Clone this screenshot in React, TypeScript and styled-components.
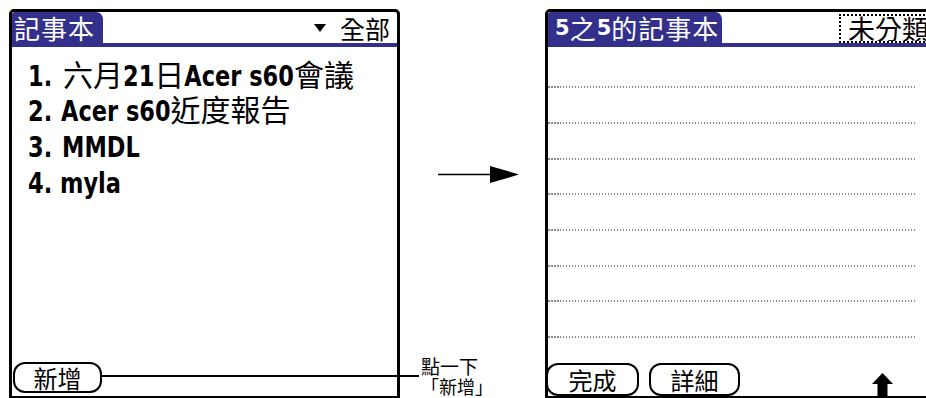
import React from 'react';
import styled, { createGlobalStyle } from 'styled-components';

const PURPLE = '#33308c';
const CJK = '"Noto Sans CJK TC", "Noto Sans CJK SC", sans-serif';
const NARROW = '"DejaVu Sans Condensed", "DejaVu Sans", sans-serif';

const GlobalStyle = createGlobalStyle`
  html, body {
    margin: 0;
    padding: 0;
    background: #fff;
    overflow: hidden;
  }
  body {
    font-family: ${CJK};
    color: #000;
  }
`;

const Page = styled.div`
  position: relative;
  display: flex;
  align-items: flex-start;
  width: 926px;
  height: 398px;
  overflow: hidden;
`;

const Screen = styled.section<{ $left?: number }>`
  flex: none;
  box-sizing: border-box;
  width: 391px;
  height: 389px;
  margin: 9px 0 0 ${(p) => p.$left ?? 0}px;
  border: 3px solid #000;
  border-bottom-width: 2px;
  border-radius: 5px 5px 0 0;
  display: flex;
  flex-direction: column;
  background: #fff;
`;

const TitleBar = styled.header`
  flex: none;
  display: flex;
  align-items: flex-end;
  justify-content: space-between;
  height: 31px;
  border-bottom: 4px solid ${PURPLE};
`;

const Tab = styled.div<{ $w: number; $pad: number }>`
  box-sizing: border-box;
  width: ${(p) => p.$w}px;
  height: 31px;
  padding-left: ${(p) => p.$pad}px;
  display: flex;
  align-items: center;
  background: ${PURPLE};
  color: #fff;
  border-radius: 3px 7px 0 0;
  font-size: 26px;
  letter-spacing: 1px;
  white-space: nowrap;
`;

const TabNum = styled.span`
  font-family: 'DejaVu Sans', sans-serif;
  font-weight: 700;
  font-size: 21px;
  letter-spacing: 0;
`;

const Picker = styled.div`
  display: flex;
  align-items: center;
  gap: 14px;
  height: 31px;
  padding-right: 7px;
  font-size: 25px;
`;

const Category = styled.div`
  box-sizing: border-box;
  height: 29px;
  width: 94px;
  padding-left: 7px;
  display: flex;
  align-items: center;
  border: 2px dotted #000;
  border-right: none;
  font-size: 27px;
  white-space: nowrap;
  overflow: hidden;
`;

const List = styled.ol`
  list-style: none;
  margin: 0;
  padding: 8.5px 0 0 16px;
`;

const Item = styled.li`
  height: 35.7px;
  line-height: 35.7px;
  font-size: 30px;
  white-space: nowrap;
`;

/* Palm bold face: narrow and tall, so the condensed face is stretched upward */
const Latin = styled.span<{ $w?: number }>`
  display: inline-block;
  ${(p) => (p.$w ? `width: ${p.$w}px;` : '')}
  font-family: ${NARROW};
  font-weight: 700;
  font-size: 25px;
  transform: scaleY(1.13);
  transform-origin: 0 26px;
`;

const Ruled = styled.div`
  padding: 5.5px 16px 0 0;
`;

const Rule = styled.div`
  height: 35.7px;
  background-image: repeating-linear-gradient(
    90deg,
    #8a8a8a 0 1.5px,
    transparent 1.5px 3px
  );
  background-size: 100% 2px;
  background-position: left bottom;
  background-repeat: no-repeat;
`;

const Footer = styled.footer<{ $pad: number }>`
  margin-top: auto;
  display: flex;
  align-items: flex-end;
  gap: 10px;
  padding-bottom: ${(p) => p.$pad}px;
`;

const Pill = styled.button<{ $w: number; $h: number; $ml?: number }>`
  box-sizing: border-box;
  width: ${(p) => p.$w}px;
  height: ${(p) => p.$h}px;
  margin-left: ${(p) => p.$ml ?? 0}px;
  padding: 0;
  border: 2px solid #000;
  border-radius: 12px;
  background: #fff;
  color: #000;
  font-family: ${CJK};
  font-size: 24px;
  line-height: 1;
`;

const ScrollIcon = styled.svg`
  margin: 0 40px 0 auto;
  display: block;
`;

const Gutter = styled.div`
  flex: none;
  width: 145px;
  height: 398px;
  display: flex;
  flex-direction: column;
`;

const FlowArrow = styled.svg`
  display: block;
  margin: 166px 0 0 38px;
`;

const Callout = styled.div`
  margin: auto 0 2px 21px;
  font-size: 19px;
  line-height: 20px;
  white-space: nowrap;
`;

const CalloutLabel = styled.span`
  font-size: 18px;
`;

const Leader = styled.div`
  position: absolute;
  left: 102px;
  top: 375px;
  width: 317px;
  height: 2px;
  background: #000;
`;

const memos = [
  <>
    <Latin $w={35}>1.</Latin>六月<Latin>21</Latin>日<Latin>Acer s60</Latin>會議
  </>,
  <>
    <Latin $w={33}>2.</Latin>
    <Latin>Acer s60</Latin>近度報告
  </>,
  <>
    <Latin $w={34}>3.</Latin>
    <Latin>MMDL</Latin>
  </>,
  <>
    <Latin $w={32}>4.</Latin>
    <Latin>myla</Latin>
  </>,
];

export default function App(): JSX.Element {
  return (
    <Page>
      <GlobalStyle />
      <Screen $left={9}>
        <TitleBar>
          <Tab $w={91} $pad={2}>記事本</Tab>
          <Picker>
            <svg width="12" height="8" viewBox="0 0 12 8">
              <polygon points="0,0 12,0 6,8" fill="#000" />
            </svg>
            全部
          </Picker>
        </TitleBar>
        <List>
          {memos.map((m, i) => (
            <Item key={i}>{m}</Item>
          ))}
        </List>
        <Footer $pad={3}>
          <Pill $w={89} $h={31} $ml={1}>新增</Pill>
        </Footer>
      </Screen>

      <Gutter>
        <FlowArrow width="81" height="17" viewBox="0 0 81 17">
          <rect x="0" y="7.75" width="53" height="1.5" fill="#000" />
          <polygon points="52,0 81,8.5 52,17" fill="#000" />
        </FlowArrow>
        <Callout>
          點一下
          <br />
          <CalloutLabel>「新增」</CalloutLabel>
        </Callout>
      </Gutter>

      <Screen>
        <TitleBar>
          <Tab $w={174} $pad={7}>
            <TabNum>5</TabNum>之<TabNum>5</TabNum>的記事本
          </Tab>
          <Category>未分類</Category>
        </TitleBar>
        <Ruled>
          {Array.from({ length: 8 }, (_, i) => (
            <Rule key={i} />
          ))}
        </Ruled>
        <Footer $pad={0}>
          <Pill $w={93} $h={33} $ml={-2}>完成</Pill>
          <Pill $w={91} $h={33}>詳細</Pill>
          <ScrollIcon width="21" height="23" viewBox="0 0 21 23">
            <polygon
              points="10.5,0 21,11 15.5,11 15.5,23 5.5,23 5.5,11 0,11"
              fill="#000"
            />
          </ScrollIcon>
        </Footer>
      </Screen>

      <Leader />
    </Page>
  );
}
